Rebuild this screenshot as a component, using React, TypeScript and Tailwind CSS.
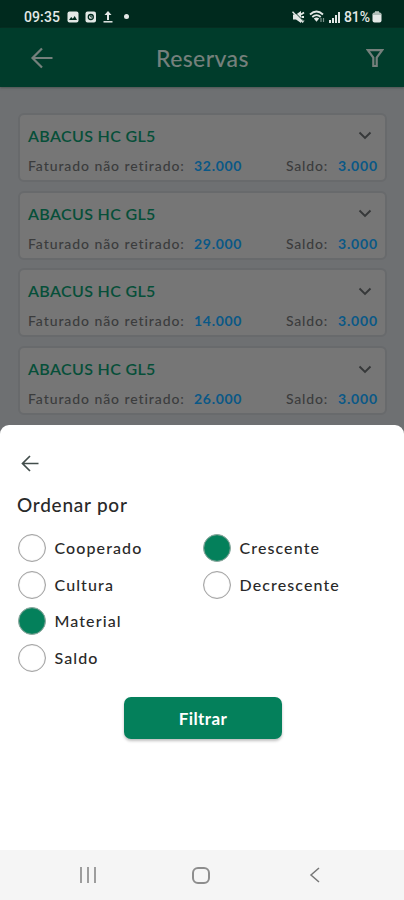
const cards = ["32.000", "29.000", "14.000", "26.000"];

const Option = ({ label, checked = false }: { label: string; checked?: boolean }) => {
    return (
        <label className="flex items-center gap-[9px] h-[36.6px]">
            <span className={checked
                ? "w-7 h-7 rounded-full border border-[#8fa9a0] bg-[#04805b] shadow-[inset_0_0_1px_#a9a9a9]"
                : "w-7 h-7 rounded-full border border-[#a3a3a3] bg-white shadow-[inset_0_0_1px_#808080]"} />
            <span className="text-base leading-5 font-medium tracking-[1.1px] text-[#292929]">{label}</span>
        </label>
    )
}

const Card = ({ value }: { value: string }) => {
    return (
        <div className="h-[69px] shrink-0 rounded-md border-2 border-[#686a6c] bg-[#767676] pl-2 pr-[7px] pt-[9px]">
            <div className="flex h-6 items-center justify-between pr-[6px]">
                <span className="text-base font-semibold tracking-[0.35px] text-[#064f39]">ABACUS HC GL5</span>
                <svg width="14" height="9" viewBox="0 0 14 9" fill="none" stroke="#363839" strokeWidth="1.9">
                    <path d="M1.5 1.5 7 7l5.500-5.500" />
                </svg>
            </div>
            <div className="mt-[6px] flex h-6 items-center justify-between text-sm font-medium text-[#3b3c3d]">
                <span className="flex">
                    <span className="w-[166px] tracking-[0.92px]">Faturado não retirado:</span>
                    <b className="tracking-[0.7px] text-[#0a5886]">{value}</b>
                </span>
                <span className="flex">
                    <span className="w-[52px] tracking-[0.8px]">Saldo:</span>
                    <b className="w-10 tracking-[0.8px] text-[#0a5886]">3.000</b>
                </span>
            </div>
        </div>
    )
}

const StatusBar = () => {
    return (
        <div className="flex h-7 items-center justify-between bg-[#002a1e] pl-6 pr-[22px] pt-[5px] font-[Roboto,sans-serif] text-sm font-medium text-[#e3e8e6]">
            <div className="flex items-center">
                <span className="w-[43px] tracking-[0.1px]">09:35</span>
                <svg width="12" height="12" viewBox="0 0 12 12">
                    <rect x=".5" y=".5" width="11" height="11" rx="2" fill="#e3e8e6" />
                    <path d="m2 9 2.2-3 1.6 1.8L7.7 5 10 9z" fill="#002a1e" />
                </svg>
                <svg className="ml-[6px]" width="12" height="12" viewBox="0 0 12 12">
                    <rect x=".5" y=".5" width="10.5" height="11" rx="2" fill="#e3e8e6" />
                    <circle cx="5.8" cy="6" r="2.5" fill="none" stroke="#002a1e" strokeWidth="1.3" />
                    <path d="M5.8 4.4V6h1.5" fill="none" stroke="#002a1e" />
                </svg>
                <svg className="ml-[5px]" width="12" height="13" viewBox="0 0 12 13" stroke="#e3e8e6" fill="none">
                    <path d="M6 10V3" strokeWidth="2" />
                    <path d="M2.5 5 6 1l3.5 4z" fill="#e3e8e6" stroke="none" />
                    <path d="M1.5 11.8h9" strokeWidth="1.5" />
                </svg>
                <span className="ml-[10px] h-[5px] w-[5px] rounded-full bg-[#e3e8e6]" />
            </div>
            <div className="flex items-center">
                <svg width="13" height="12" viewBox="0 0 13 12" fill="#e3e8e6">
                    <path d="M1 3.500h3L9 0v12L4 8.500H1z" />
                    <path d="m9 3.500 3-2M9.500 6H12M9 8.500l3 2" stroke="#e3e8e6" strokeWidth="1.8" />
                    <path d="m2 .5 10 10" stroke="#002a1e" strokeWidth="1" />
                    <path d="M.5 .8 11 11.500" stroke="#e3e8e6" strokeWidth="1.400" />
                </svg>
                <svg className="ml-1" width="17" height="13" viewBox="0 0 17 13" fill="none" stroke="#e3e8e6" strokeWidth="1.800">
                    <path d="M1 4.500q6.500-6 13 0M3.300 7q4.200-3.800 8.400 0" />
                    <path d="m4.800 8.500 2.700 3.200 2.700-3.200q-2.700-2-5.400 0z" fill="#e3e8e6" stroke="none" />
                    <path d="M12 8v4M14.500 8v4" stroke="#7a928a" strokeWidth="1.200" />
                </svg>
                <svg className="ml-[3px]" width="11" height="12" viewBox="0 0 11 12" fill="#e3e8e6">
                    <path d="M0 9h2v3H0zM3 7h2v5H3zM6 4h2v8H6zM9 1h2v11H9z" />
                </svg>
                <span className="ml-1 w-[28px] tracking-[-0.1px]">81%</span>
                <svg width="10" height="13" viewBox="0 0 10 13" fill="#e3e8e6">
                    <rect x="3" y="1" width="4" height="3" fill="#8ea39b" />
                    <rect x=".5" y="2.500" width="9" height="10" rx="2" />
                    <path d="M.8 4h8.400" stroke="#7a928a" />
                </svg>
            </div>
        </div>
    )
}

const App = () => {
    return (
        <div className="flex h-[900px] w-[404px] flex-col overflow-hidden bg-[#6e7072] font-[Lato,sans-serif]">
            <StatusBar />
            <header className="flex h-[59px] shrink-0 items-center bg-[#003c2b] pl-[30px] pr-5 shadow-[0_1px_2px_#4b5552]">
                <svg width="24" height="22" viewBox="0 0 24 22" fill="none" stroke="#75807c" strokeWidth="2.200">
                    <path d="M22.500 11H2.500M12 1.500 2.500 11l9.500 9.500" />
                </svg>
                <h1 className="ml-[102px] flex-1 pt-px text-[23px] font-medium tracking-[0.4px] text-[#75807c]">Reservas</h1>
                <svg width="18" height="20" viewBox="0 0 18 20" fill="none" stroke="#75807c" strokeWidth="2.200">
                    <path d="M1.800 2.100h14.400l-5.500 7.400V18H7.300V9.500z" />
                </svg>
            </header>
            <main className="flex h-[346px] shrink-0 flex-col gap-[8.8px] pl-[18px] pr-[17px] pt-[25.8px]">
                {cards.map((value) => <Card key={value} value={value} />)}
            </main>
            <section className="relative -mt-2 flex h-[425px] shrink-0 flex-col rounded-t-[9px] bg-white px-[17px] pt-[30px]">
                <svg className="ml-1" width="19" height="17" viewBox="0 0 19 17" fill="none" stroke="#424d4b" strokeWidth="1.700">
                    <path d="M17.500 8.500H2M9 1 1.500 8.500 9 16" />
                </svg>
                <h2 className="mt-[21px] text-[19px] leading-6 font-medium tracking-[0.75px] text-[#292929]">Ordenar por</h2>
                <div className="mt-[13px] flex pl-[0.5px]">
                    <div className="w-[185px]">
                        <Option label="Cooperado" />
                        <Option label="Cultura" />
                        <Option label="Material" checked />
                        <Option label="Saldo" />
                    </div>
                    <div>
                        <Option label="Crescente" checked />
                        <Option label="Decrescente" />
                    </div>
                </div>
                <button className="ml-[107px] mt-[21px] h-[42px] w-[158px] rounded-[7px] bg-[#04805b] text-[17px] font-bold tracking-[0.4px] text-white shadow-[0_2px_3px_#00000040]">
                    Filtrar
                </button>
            </section>
            <nav className="flex h-[50px] shrink-0 items-center bg-[#f5f5f5] pl-[79px]">
                <svg width="18" height="16" viewBox="0 0 18 16" stroke="#888888" strokeWidth="1.600">
                    <path d="M2 0v16M9 0v16M16 0v16" />
                </svg>
                <span className="ml-[95px] h-[17px] w-[18px] rounded-[6px] border-2 border-[#8d8d8d]" />
                <svg className="ml-[99px]" width="11" height="16" viewBox="0 0 11 16" fill="none" stroke="#777777" strokeWidth="1.500">
                    <path d="M10 1 2 8l8 7" />
                </svg>
            </nav>
        </div>
    )
}

export default App;
